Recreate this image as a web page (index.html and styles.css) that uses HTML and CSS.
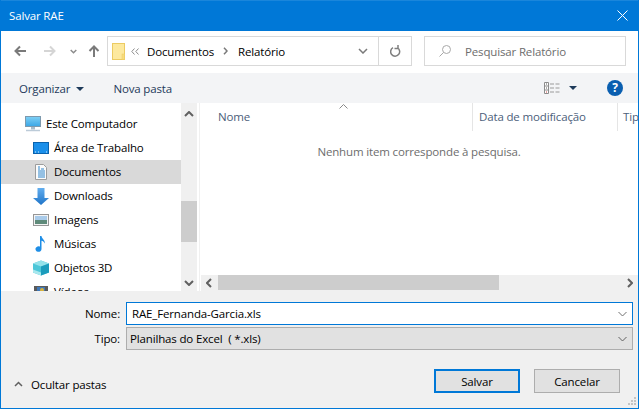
FILE: index.html
```html
<!DOCTYPE html>
<html lang="pt-BR">
<head>
    <meta charset="UTF-8">
    <title>Salvar RAE</title>
    <link rel="stylesheet" href="styles.css">
</head>
<body>
    <div class="dialog">
        <div class="titlebar">
            <span>Salvar RAE</span>
            <svg width="11" height="11" viewBox="0 0 11 11"><path d="M.5.5l10 10M10.500.5l-10 10" stroke="#fff" fill="none"/></svg>
        </div>

        <div class="navbar">
            <div class="nav-buttons">
                <svg width="12" height="12" viewBox="0 0 12 12"><path d="M12 6H1.500M6 1.500L1.500 6 6 10.500" stroke="#7a7a7a" stroke-width="2" fill="none"/></svg>
                <svg class="nav-forward" width="12" height="12" viewBox="0 0 12 12"><path d="M0 6h10.500M6 1.500L10.500 6 6 10.500" stroke="#d5d5d5" stroke-width="2" fill="none"/></svg>
                <svg class="nav-recent" width="7" height="5" viewBox="0 0 7 5"><path d="M.7 1l2.800 2.800L6.300 1" stroke="#8c8c8c" stroke-width="1.500" fill="none"/></svg>
                <svg class="nav-up" width="12" height="12" viewBox="0 0 12 12"><path d="M6 12V1.500M1.500 6L6 1.500 10.500 6" stroke="#7a7a7a" stroke-width="2" fill="none"/></svg>
            </div>
            <div class="address">
                <svg width="13" height="17" viewBox="0 0 13 17"><rect x="0.500" y="0.500" width="12" height="16" fill="#fde99e" stroke="#eccb62"/><rect x="10" y="11" width="2.500" height="5.500" fill="#f8dc7c" stroke="#eccb62" stroke-width="0.500"/></svg>
                <svg class="crumb-more" width="8" height="7" viewBox="0 0 8 7"><path d="M3.500.5L.8 3.500l2.700 3M7.500.5L4.800 3.500l2.700 3" stroke="#8c8c8c" fill="none"/></svg>
                <span>Documentos</span>
                <svg class="crumb-sep" width="5" height="8" viewBox="0 0 5 8"><path d="M1 .8L4 4 1 7.200" stroke="#7a7a7a" stroke-width="1.500" fill="none"/></svg>
                <span>Relatório</span>
                <svg class="address-arrow" width="10" height="6" viewBox="0 0 10 6"><path d="M1 1l4 4 4-4" stroke="#7a7a7a" stroke-width="1.500" fill="none"/></svg>
                <div class="refresh">
                    <svg width="11" height="12" viewBox="0 0 11 12"><path d="M3 2.700a4.500 4.500 0 1 0 4.500.1M8 0v3.500H4.500" stroke="#7f7f7f" stroke-width="1.500" fill="none"/></svg>
                </div>
            </div>
            <div class="search">
                <svg width="12" height="12" viewBox="0 0 12 12"><circle cx="7.500" cy="4.500" r="4" stroke="#a8a8a8" fill="none"/><path d="M4.500 7.500L.5 11.500" stroke="#a8a8a8" fill="none"/></svg>
                <span>Pesquisar Relatório</span>
            </div>
        </div>

        <div class="toolbar">
            <span>Organizar<i class="caret"></i></span>
            <span class="tool-new">Nova pasta</span>
            <svg class="view-icon" width="16" height="12" viewBox="0 0 16 12"><path d="M.5.500h4v11h-4zM.5 4h4M.5 8h4" stroke="#8c8c8c" fill="#fff"/><path d="M2 2h1M2 6h1" stroke="#5a5a5a"/><path d="M2 10h1" stroke="#d04040"/><path d="M6 2h4M11.500 2h4M6 6h4M11.500 6h4M6 10h4M11.500 10h4" stroke="#9a9a9a"/></svg>
            <i class="caret view-caret"></i>
            <div class="help">?</div>
        </div>

        <div class="browser">
            <div class="tree">
                <div class="tree-list">
                    <div class="tree-item tree-root">
                        <svg width="16" height="16" viewBox="0 0 16 16">
                            <defs><linearGradient id="screen" x1="0" y1="0" x2="0" y2="1"><stop offset="0" stop-color="#7fd0f5"/><stop offset="1" stop-color="#3aa6e6"/></linearGradient></defs>
                            <rect x="0.500" y="0.500" width="15" height="10" fill="url(#screen)" stroke="#7d99ad"/>
                            <path d="M6 11h4v2.500H6z" fill="#a8bccb"/>
                            <path d="M1 14.500h14" stroke="#bccbd8" stroke-width="1.500"/>
                        </svg>
                        <span>Este Computador</span>
                    </div>
                    <div class="tree-item">
                        <svg width="16" height="16" viewBox="0 0 16 16">
                            <rect x="0.500" y="2.500" width="15" height="11" fill="#1a8fea" stroke="#0a62ad"/>
                            <path d="M2 12h1M5 12h1M13 12h1" stroke="#d6ecfb"/>
                        </svg>
                        <span>Área de Trabalho</span>
                    </div>
                    <div class="tree-item selected">
                        <svg width="16" height="16" viewBox="0 0 16 16">
                            <path d="M2.500.5h8l3 3v12h-11z" fill="#fbfbfb" stroke="#9c9c9c"/>
                            <path d="M5 3h2M5 5h2M8 5h3M5 7h7M5 9h7M5 11h7M5 13h7" stroke="#2f86cc"/>
                        </svg>
                        <span>Documentos</span>
                    </div>
                    <div class="tree-item">
                        <svg width="16" height="17" viewBox="0 0 16 17">
                            <defs><linearGradient id="down" x1="0" y1="0" x2="0" y2="1"><stop offset="0" stop-color="#62aeef"/><stop offset="1" stop-color="#1f74c8"/></linearGradient></defs>
                            <path d="M4.500 0h7v10H16l-8 7-8-7h4.500z" fill="url(#down)"/>
                        </svg>
                        <span>Downloads</span>
                    </div>
                    <div class="tree-item">
                        <svg width="16" height="16" viewBox="0 0 16 16">
                            <rect x="0.500" y="2.500" width="15" height="11" fill="#f4f4f4" stroke="#969696"/>
                            <rect x="2" y="4" width="12" height="4" fill="#a9cbea"/>
                            <rect x="2" y="8" width="12" height="4" fill="#5f8a7a"/>
                        </svg>
                        <span>Imagens</span>
                    </div>
                    <div class="tree-item">
                        <svg width="16" height="16" viewBox="0 0 16 16"><path d="M7 0h1.500c.3 2.800 3.800 3.800 3.200 7.500-.6-1.600-1.900-2.500-3.200-2.700V13a3 2.800 0 1 1-1.500-2.400z" fill="#1e8ee6"/></svg>
                        <span>Músicas</span>
                    </div>
                    <div class="tree-item">
                        <svg width="16" height="16" viewBox="0 0 16 16">
                            <path d="M8 .5l8 3v9l-8 3-8-3v-9z" fill="#4cc6d8"/>
                            <path d="M0 3.500l8 3 8-3-8-3z" fill="#94e2ea"/>
                            <path d="M8 6.500v9l8-3v-9z" fill="#1b9cbc"/>
                            <path d="M0 12.500l8 3v-3l-8-3z" fill="#a9e8ee"/>
                        </svg>
                        <span>Objetos 3D</span>
                    </div>
                    <div class="tree-item">
                        <svg width="16" height="16" viewBox="0 0 16 16">
                            <rect x="1" y="2" width="14" height="12" fill="#5a5a5a"/>
                            <rect x="4" y="3" width="8" height="10" fill="#3f78b8"/>
                            <circle cx="9" cy="6" r="2" fill="#d8b23c"/>
                        </svg>
                        <span>Vídeos</span>
                    </div>
                </div>
                <div class="vscroll">
                    <svg width="10" height="6" viewBox="0 0 10 6"><path d="M1 5l4-4 4 4" stroke="#606060" stroke-width="2" fill="none"/></svg>
                    <div class="vtrack"><div class="vthumb"></div></div>
                    <svg width="10" height="6" viewBox="0 0 10 6"><path d="M1 1l4 4 4-4" stroke="#606060" stroke-width="2" fill="none"/></svg>
                </div>
            </div>

            <div class="files">
                <div class="columns">
                    <div class="col col-name">Nome
                        <svg class="sort" width="9" height="5" viewBox="0 0 9 5"><path d="M.5 4.500l4-4 4 4" stroke="#8a8a8a" fill="none"/></svg>
                    </div>
                    <div class="col col-date">Data de modificação</div>
                    <div class="col col-type">Tipo</div>
                </div>
                <div class="empty">Nenhum item corresponde à pesquisa.</div>
                <div class="hscroll">
                    <svg width="6" height="10" viewBox="0 0 6 10"><path d="M5 1L1 5l4 4" stroke="#606060" stroke-width="2" fill="none"/></svg>
                    <div class="htrack"><div class="hthumb"></div></div>
                    <svg width="6" height="10" viewBox="0 0 6 10"><path d="M1 1l4 4-4 4" stroke="#606060" stroke-width="2" fill="none"/></svg>
                </div>
            </div>
        </div>

        <div class="form">
            <div class="form-row">
                <label>Nome:</label>
                <div class="field field-name">
                    <span>RAE_Fernanda-Garcia.xls</span>
                    <svg width="9" height="6" viewBox="0 0 9 6"><path d="M.5 1l4 4 4-4" stroke="#707070" fill="none"/></svg>
                </div>
            </div>
            <div class="form-row">
                <label>Tipo:</label>
                <div class="field field-type">
                    <span>Planilhas do Excel  ( *.xls)</span>
                    <svg width="9" height="6" viewBox="0 0 9 6"><path d="M.5 1l4 4 4-4" stroke="#606060" fill="none"/></svg>
                </div>
            </div>
            <div class="actions">
                <div class="hide-folders">
                    <svg width="9" height="6" viewBox="0 0 9 6"><path d="M1 5l3.500-3.500L8 5" stroke="#606060" stroke-width="1.500" fill="none"/></svg>
                    <span>Ocultar pastas</span>
                </div>
                <button class="btn btn-default">Salvar</button>
                <button class="btn">Cancelar</button>
            </div>
            <svg class="grip" width="8" height="8" viewBox="0 0 8 8"><path d="M6 0h2v2H6zM3 3h2v2H3zM6 3h2v2H6zM0 6h2v2H0zM3 6h2v2H3zM6 6h2v2H6z" fill="#c4c4c4"/></svg>
        </div>
    </div>
</body>
</html>
```

FILE: styles.css
```css
html, body {
    margin: 0;
    height: 100%;
}
body {
    font-family: "Open Sans", Arial, sans-serif;
    font-size: 11.5px;
    letter-spacing: -0.15px;
    color: #000;
    overflow: hidden;
}
svg {
    display: block;
    flex: none;
}
.dialog {
    width: 639px;
    height: 409px;
    box-sizing: border-box;
    border: 1px solid #0078d7;
    border-top: 0;
    display: flex;
    flex-direction: column;
    background: #fff;
}

/* title */
.titlebar {
    height: 31px;
    flex: none;
    box-sizing: border-box;
    border-top: 1px solid #1a86db;
    background: #0078d7;
    color: #fff;
    display: flex;
    align-items: center;
    justify-content: space-between;
    padding: 0 10px 2px 8px;
}

/* back / forward + address + search */
.navbar {
    height: 42px;
    flex: none;
    box-sizing: border-box;
    padding-top: 5px;
    display: flex;
    align-items: flex-start;
}
.nav-buttons {
    width: 106px;
    height: 30px;
    flex: none;
    display: flex;
    align-items: center;
    padding-left: 13px;
    box-sizing: border-box;
}
.nav-forward { margin-left: 18px; }
.nav-recent { margin-left: 14px; }
.nav-up { margin-left: 11px; }
.address {
    width: 305px;
    height: 30px;
    flex: none;
    box-sizing: border-box;
    border: 1px solid #d9d9d9;
    display: flex;
    align-items: center;
    padding-left: 4px;
}
.crumb-more { margin: 0 8px 0 6px; }
.crumb-sep { margin: 0 10px 0 9px; }
.address-arrow { margin-left: auto; margin-right: 10px; }
.refresh {
    width: 33px;
    height: 28px;
    flex: none;
    box-sizing: border-box;
    border-left: 1px solid #d9d9d9;
    display: flex;
    align-items: center;
    justify-content: center;
}
.search {
    width: 202px;
    height: 30px;
    flex: none;
    box-sizing: border-box;
    margin-left: 12px;
    border: 1px solid #d9d9d9;
    display: flex;
    align-items: center;
    gap: 14px;
    padding-left: 14px;
    color: #6d6d6d;
}

/* command bar */
.toolbar {
    height: 30px;
    flex: none;
    background: #f3f4f6;
    display: flex;
    align-items: center;
    padding-left: 18px;
    color: #1e3a5a;
}
.caret {
    display: inline-block;
    width: 0;
    height: 0;
    border: 4px solid transparent;
    border-top: 4px solid #1e3a5a;
    border-bottom: 0;
    margin-left: 6px;
    vertical-align: 2px;
}
.tool-new { margin-left: 29px; }
.view-icon { margin-left: auto; }
.view-caret { margin-left: 9px; }
.help {
    width: 16px;
    height: 16px;
    border-radius: 50%;
    background: #0a5fb0;
    color: #fff;
    font-weight: bold;
    font-size: 12px;
    line-height: 16px;
    text-align: center;
    margin: 0 15px 0 30px;
}

/* tree and file list */
.browser {
    height: 188px;
    flex: none;
    display: flex;
}
.tree {
    width: 196px;
    flex: none;
    display: flex;
    margin-right: 2px;
}
.tree-list {
    width: 180px;
    overflow: hidden;
    padding-top: 9px;
}
.tree-item {
    height: 24px;
    display: flex;
    align-items: center;
    gap: 5px;
    padding-left: 32px;
}
.tree-item span { padding-bottom: 2px; }
.tree-root { padding-left: 24px; }
.selected { background: #d9d9d9; }
.vscroll {
    width: 16px;
    background: #f0f0f0;
    display: flex;
    flex-direction: column;
    align-items: center;
    padding: 8px 0 5px;
    box-sizing: border-box;
}
.vtrack {
    flex: 1;
    width: 16px;
    padding-top: 84px;
    box-sizing: border-box;
}
.vthumb {
    height: 41px;
    background: #cdcdcd;
}
.files {
    flex: 1;
    display: flex;
    flex-direction: column;
    min-width: 0;
    border-left: 1px solid #f0f0f0;
}
.columns {
    height: 28px;
    flex: none;
    display: flex;
    color: #4c607a;
    overflow: hidden;
}
.col {
    flex: none;
    height: 100%;
    box-sizing: border-box;
    border-right: 1px solid #e5e5e5;
    padding: 6px 0 0 6px;
    position: relative;
}
.col-name { width: 273px; padding-left: 18px; }
.col-date { width: 145px; }
.col-type { width: 40px; padding-left: 5px; border-right: 0; white-space: nowrap; }
.sort {
    position: absolute;
    left: 139px;
    top: 1px;
}
.empty {
    flex: 1;
    text-align: center;
    color: #6d6d6d;
    padding-top: 13px;
}
.hscroll {
    height: 16px;
    flex: none;
    margin-left: 1px;
    background: #f0f0f0;
    display: flex;
    align-items: center;
    justify-content: space-between;
    padding: 0 5px;
}
.htrack {
    flex: 1;
    height: 16px;
    padding: 0 128px 0 6px;
}
.hthumb {
    height: 15px;
    background: #cdcdcd;
}

/* name, type and buttons */
.form {
    flex: 1;
    background: #f0f0f0;
    padding-top: 11px;
    position: relative;
}
.form-row {
    display: flex;
    align-items: center;
    height: 23px;
    margin-bottom: 2px;
    padding-right: 5px;
}
.form-row label {
    width: 119px;
    text-align: right;
    padding-right: 6px;
}
.field {
    flex: 1;
    height: 23px;
    box-sizing: border-box;
    display: flex;
    align-items: center;
    justify-content: space-between;
    padding-right: 5px;
}
.field-name {
    background: #fff;
    border: 1px solid #0078d7;
    padding-left: 5px;
}
.field-type {
    background: #e1e1e1;
    border: 1px solid #adadad;
    padding-left: 3px;
    white-space: pre;
}
.actions {
    display: flex;
    align-items: center;
    margin-top: 19px;
    padding-right: 18px;
}
.hide-folders {
    display: flex;
    align-items: center;
    gap: 8px;
    padding: 6px 0 0 13px;
    margin-right: auto;
}
.btn {
    width: 86px;
    height: 24px;
    box-sizing: border-box;
    background: #e1e1e1;
    border: 1px solid #adadad;
    font: inherit;
    letter-spacing: inherit;
    color: inherit;
    margin-left: 14px;
    padding: 0;
}
.btn-default {
    border: 2px solid #0078d7;
}
.grip {
    position: absolute;
    right: 2px;
    bottom: 3px;
}
```
